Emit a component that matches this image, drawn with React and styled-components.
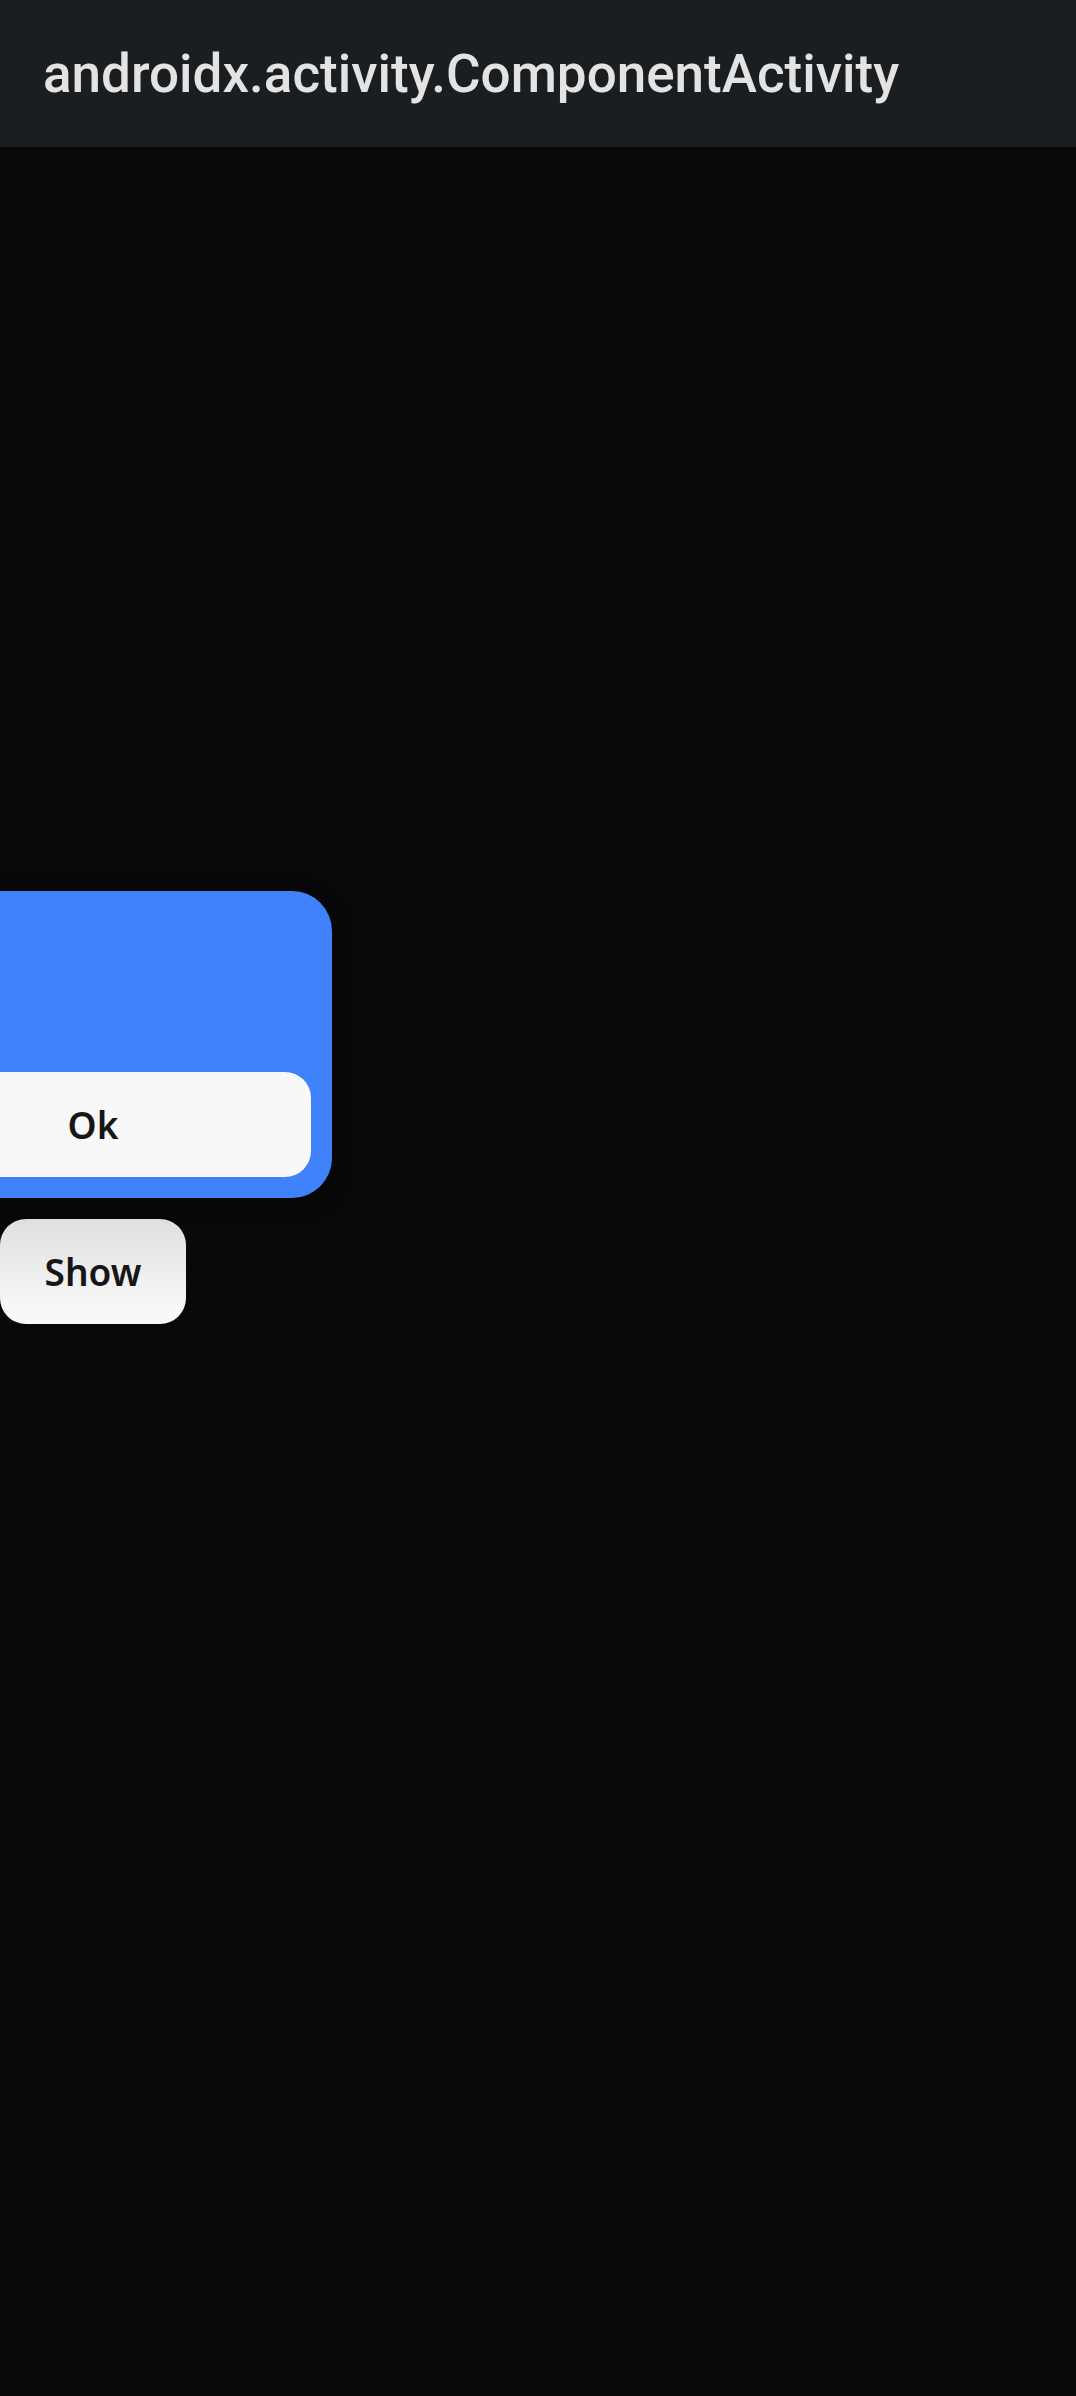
import React from 'react'
import styled, { createGlobalStyle } from 'styled-components'

const GlobalStyle = createGlobalStyle`
  html, body {
    margin: 0;
    padding: 0;
    background: #080808;
  }
  body {
    font-family: 'Open Sans', 'Noto Sans', sans-serif;
    overflow: hidden;
  }
`

const Screen = styled.div`
  width: 1076px;
  height: 2396px;
  background: #080808;
  display: flex;
  flex-direction: column;
  overflow: hidden;
`

const TitleBar = styled.header`
  height: 147px;
  flex: none;
  background: #1b1e21;
  display: flex;
  align-items: center;
  padding-left: 43px;
  box-sizing: border-box;
`

const Title = styled.h1`
  margin: 0;
  font-family: Roboto, 'Liberation Sans', sans-serif;
  font-weight: 500;
  font-size: 53px;
  color: #e3e3e3;
`

const Content = styled.main`
  flex: 1;
  padding-top: 744px;
`

// the dialog column hangs off the left edge of the screen
const Column = styled.div`
  width: 478px;
  margin-left: -146px;
  display: flex;
  flex-direction: column;
  align-items: center;
  gap: 21px;
`

const Card = styled.div`
  width: 100%;
  box-sizing: border-box;
  background: #4081fc;
  border-radius: 40px;
  padding: 181px 21px 21px;
  box-shadow: 0 6px 18px rgba(0, 0, 0, 0.35);
`

const Button = styled.button`
  border: none;
  border-radius: 26px;
  height: 105px;
  width: ${(p) => (p.$wide ? '100%' : '186px')};
  background: ${(p) =>
    p.$wide ? '#f8f8f8' : 'linear-gradient(#dfdfdf, #f8f8f8 85%)'};
  color: #161616;
  font-family: 'Noto Sans', 'Open Sans', sans-serif;
  font-weight: 600;
  font-size: 37px;
  display: flex;
  align-items: center;
  justify-content: center;
  padding: 0;
`

export default function App() {
  return (
    <>
      <GlobalStyle />
      <Screen>
        <TitleBar>
          <Title>androidx.activity.ComponentActivity</Title>
        </TitleBar>
        <Content>
          <Column>
            <Card>
              <Button $wide>Ok</Button>
            </Card>
            <Button>Show</Button>
          </Column>
        </Content>
      </Screen>
    </>
  )
}
